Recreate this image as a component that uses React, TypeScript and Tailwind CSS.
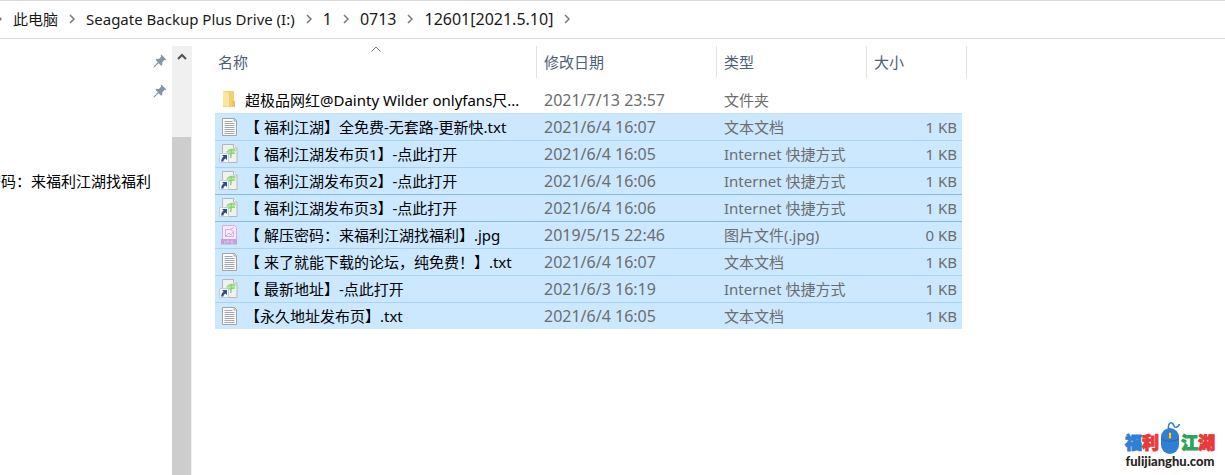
type Kind = "folder" | "text" | "link" | "image";

interface Entry {
  name: string;
  kind: Kind;
  modified: string;
  type: string;
  size?: string;
  selected?: boolean;
  focused?: boolean;
}

const shortcut = "Internet 快捷方式";

const entries: Entry[] = [
  { name: "超极品网红@Dainty Wilder onlyfans尺...", kind: "folder", modified: "2021/7/13 23:57", type: "文件夹" },
  { name: "【 福利江湖】全免费-无套路-更新快.txt", kind: "text", modified: "2021/6/4 16:07", type: "文本文档", size: "1 KB", selected: true },
  { name: "【 福利江湖发布页1】-点此打开", kind: "link", modified: "2021/6/4 16:05", type: shortcut, size: "1 KB", selected: true },
  { name: "【 福利江湖发布页2】-点此打开", kind: "link", modified: "2021/6/4 16:06", type: shortcut, size: "1 KB", selected: true },
  { name: "【 福利江湖发布页3】-点此打开", kind: "link", modified: "2021/6/4 16:06", type: shortcut, size: "1 KB", selected: true, focused: true },
  { name: "【 解压密码：来福利江湖找福利】.jpg", kind: "image", modified: "2019/5/15 22:46", type: "图片文件(.jpg)", size: "0 KB", selected: true },
  { name: "【 来了就能下载的论坛，纯免费！】.txt", kind: "text", modified: "2021/6/4 16:07", type: "文本文档", size: "1 KB", selected: true },
  { name: "【 最新地址】-点此打开", kind: "link", modified: "2021/6/3 16:19", type: shortcut, size: "1 KB", selected: true },
  { name: "【永久地址发布页】.txt", kind: "text", modified: "2021/6/4 16:05", type: "文本文档", size: "1 KB", selected: true },
];

const crumbs = ["此电脑", "Seagate Backup Plus Drive (I:)", "1", "0713", "12601[2021.5.10]"];

function Chevron() {
  return (
    <svg viewBox="0 0 6 10" className="h-[10px] w-[6px] shrink-0" fill="none" stroke="#777" strokeWidth="1.5">
      <path d="M1 1l4 4-4 4" />
    </svg>
  );
}

function Pin() {
  return (
    <svg viewBox="0 0 14 14" className="size-[14px]" fill="#8796a3">
      <path d="M8.3.6l5 4.9-1 .8-.9-.2-2.2 2.3.2 2.2-1.2 1.2-2.6-2.6L1.5 13.3.6 13.5l.1-.9 4.2-4.3-2.5-2.5 1.2-1.1 2.3.2 2.3-2.3-.5-1.1z" />
    </svg>
  );
}

function FileIcon({ kind }: { kind: Kind }) {
  if (kind === "folder") {
    return (
      <svg viewBox="0 0 20 20" className="size-5 shrink-0">
        <path d="M4 1h10l1 1v9l1 1v5H4z" fill="#f3cf70" />
        <path d="M4 1l6 2v14l-6-1z" fill="#fce5a0" />
        <path d="M13 11h3v6h-3z" fill="#ecc45f" />
      </svg>
    );
  }
  if (kind === "text") {
    return (
      <svg viewBox="0 0 20 20" className="size-5 shrink-0" fill="none">
        <path d="M3.5 1.5h12l2 2v15h-14z" fill="#fbfbfb" stroke="#a0a4a7" />
        <path d="M15 1.5V4h2.5" stroke="#a0a4a7" />
        <path d="M5.5 4.5h8M5.5 6.500h10M5.5 8.500h10M5.5 10.500h10M5.5 12.500h10M5.5 14.500h10M5.5 16.500h10" stroke="#a3a7aa" />
      </svg>
    );
  }
  if (kind === "image") {
    return (
      <svg viewBox="0 0 20 20" className="size-5 shrink-0" fill="none">
        <path d="M3.5.5h12l2 2v12h-14z" fill="#f6ebfb" stroke="#cfaee4" />
        <path d="M6.5 4.5h5l3 2v5h-8zM7 11l3-3 2 2 2-3M11 4.500l4-2" stroke="#cfaee4" />
        <path d="M2 14h16v5.500H2z" fill="#c4a0df" />
        <path d="M6 16v2H5M8 18v-2h1.5v1H8M14 16h-2v2h2v-1" stroke="#dcc4ee" />
      </svg>
    );
  }
  return (
    <svg viewBox="0 0 20 20" className="size-5 shrink-0" fill="none">
      <path d="M3.5.5h11L18 4v14.5H3.5z" fill="#eef3f1" stroke="#b3b8bb" />
      <path d="M14.5.5V4H18" fill="#fff" stroke="#b3b8bb" />
      <path d="M8 8c1-4 7-5 9-1l-2 1 1 2h-3l-.5 5-2-5-2.500 1z" fill="#b5e39c" />
      <path d="M7.500 8c2-2 5-3 9-2M12.500 5l-1 9M9 10l7-1" stroke="#88cf68" />
      <path d="M.5 9.500h9v9h-9z" fill="#f4f8fc" stroke="#c3ced8" />
      <path d="M3 11h5v5l-1.600-1.600C5 15.200 4.500 16.200 4.400 17.500H2.200c0-2 .8-3.500 2.400-4.900z" fill="#2c4f8c" />
    </svg>
  );
}

function Mouse() {
  return (
    <svg viewBox="0 0 22 34" className="h-[34px] w-[22px] shrink-0" fill="none">
      <path d="M10 9C8 3 12 0 14 3s1 4 4 3 1-3 3-2" stroke="#2d7fd3" strokeWidth="1.5" />
      <rect x="2" y="7" width="18" height="26" rx="9" fill="#2f80d4" />
      <path d="M2 18C7 21 15 21 20 18" stroke="#2468b4" />
      <rect x="9.5" y="11" width="3" height="7" rx="1.5" fill="#f2cf48" stroke="#61543a" strokeWidth=".6" />
    </svg>
  );
}

function Heading({ children, span = 1, sorted = false }: { children: string; span?: number; sorted?: boolean }) {
  return (
    <th colSpan={span} aria-sort={sorted ? "ascending" : undefined} className="border-r border-[#e2e2e2] p-0 align-top font-normal">
      <button type="button" className={`relative flex h-8 w-full items-center text-[#4c607a] ${sorted ? "pl-[3px]" : "pl-[7px]"}`}>
        {children}
        {sorted && (
          <svg viewBox="0 0 10 6" className="absolute inset-x-0 top-0 mx-auto h-[6px] w-[10px]" fill="none" stroke="#777">
            <path d="M.5 5.5L5 1l4.500 4.500" />
          </svg>
        )}
      </button>
    </th>
  );
}

function Row({ entry, previous }: { entry: Entry; previous?: Entry }) {
  // the focus outline shares its lower edge with the row below it
  let line = "";
  if (entry.focused || previous?.focused) line = "border-t border-[#83bbe5]";
  else if (previous?.selected) line = "border-t border-[#a9d3f2]";
  else if (entry.selected) line = "border-t border-[#c3e2fa]";
  const cell = `h-[27px] p-0 pl-[7px] ${entry.selected ? "bg-[#cce8ff]" : ""} ${line}`;

  return (
    <tr aria-selected={!!entry.selected} className="text-[#6d6d6d]">
      <td className={`${cell} text-black`}>
        <div className="-ml-[3px] flex items-center gap-[6px] whitespace-pre">
          <FileIcon kind={entry.kind} />
          {entry.name}
        </div>
      </td>
      <td className={`${cell} text-base leading-5`}>{entry.modified}</td>
      <td className={cell}>{entry.type}</td>
      <td className={`${cell} pr-[5px] text-right`}>{entry.size}</td>
      <td className="p-0" />
    </tr>
  );
}

export default function App() {
  return (
    <div className="relative flex min-h-screen flex-col overflow-hidden bg-white font-['Noto_Sans','Noto_Sans_CJK_SC',sans-serif] text-[15px] leading-5 text-black">
      <nav aria-label="路径" className="flex h-[39px] items-center gap-[11px] border-y border-[#d9d9d9] pb-0.5 text-[#1a1a1a]">
        <span className="-ml-1 flex">
          <Chevron />
        </span>
        {crumbs.map((crumb) => (
          <span key={crumb} className="flex items-center gap-[11px] whitespace-nowrap">
            <a href="#" className={/^\d/.test(crumb) ? "text-base leading-5" : ""}>
              {crumb}
            </a>
            <Chevron />
          </span>
        ))}
      </nav>

      <div className="flex flex-1 pt-[7px]">
        <aside className="flex w-[172px] shrink-0 flex-col overflow-hidden">
          <div className="flex flex-col items-end gap-4 pt-2 pr-[5px]">
            <Pin />
            <Pin />
          </div>
          <a href="#" className="mt-[73px] flex justify-end pr-[21px] whitespace-nowrap">
            密码：来福利江湖找福利
          </a>
        </aside>
        <div className="flex w-5 shrink-0 flex-col bg-[#f0f0f0]">
          <button type="button" aria-label="向上滚动" className="flex h-[91px] justify-center pt-[7px]">
            <svg viewBox="0 0 10 7" className="h-[7px] w-[10px]" fill="none" stroke="#505050" strokeWidth="2">
              <path d="M1 6l4-4 4 4" />
            </svg>
          </button>
          <div className="w-[19px] flex-1 bg-[#cdcdcd]" />
        </div>

        <main className="pl-[23px]">
          <table className="w-[752px] table-fixed border-separate border-spacing-0 text-left">
            <colgroup>
              <col className="w-[322px]" />
              <col className="w-[180px]" />
              <col className="w-[150px]" />
              <col className="w-[95px]" />
              <col className="w-[5px]" />
            </colgroup>
            <thead>
              <tr>
                <Heading sorted>名称</Heading>
                <Heading>修改日期</Heading>
                <Heading>类型</Heading>
                <Heading span={2}>大小</Heading>
              </tr>
              <tr aria-hidden="true">
                <td colSpan={5} className="h-2 p-0" />
              </tr>
            </thead>
            <tbody>
              {entries.map((entry, i) => (
                <Row key={entry.name} entry={entry} previous={entries[i - 1]} />
              ))}
            </tbody>
          </table>
        </main>
      </div>

      <div className="absolute right-[10px] bottom-2 flex flex-col items-center">
        <div className="flex items-end text-[17px] leading-6 font-black [-webkit-text-stroke:1px]">
          <span className="text-[#2f80d4]">福</span>
          <span className="text-[#e83a3a]">利</span>
          <Mouse />
          <span className="text-[#2fa35a]">江</span>
          <span className="text-[#e83a3a]">湖</span>
        </div>
        <span className="font-['Lato',sans-serif] text-[13px] leading-3 font-black text-[#2b2422]">fulijianghu.com</span>
      </div>
    </div>
  );
}
